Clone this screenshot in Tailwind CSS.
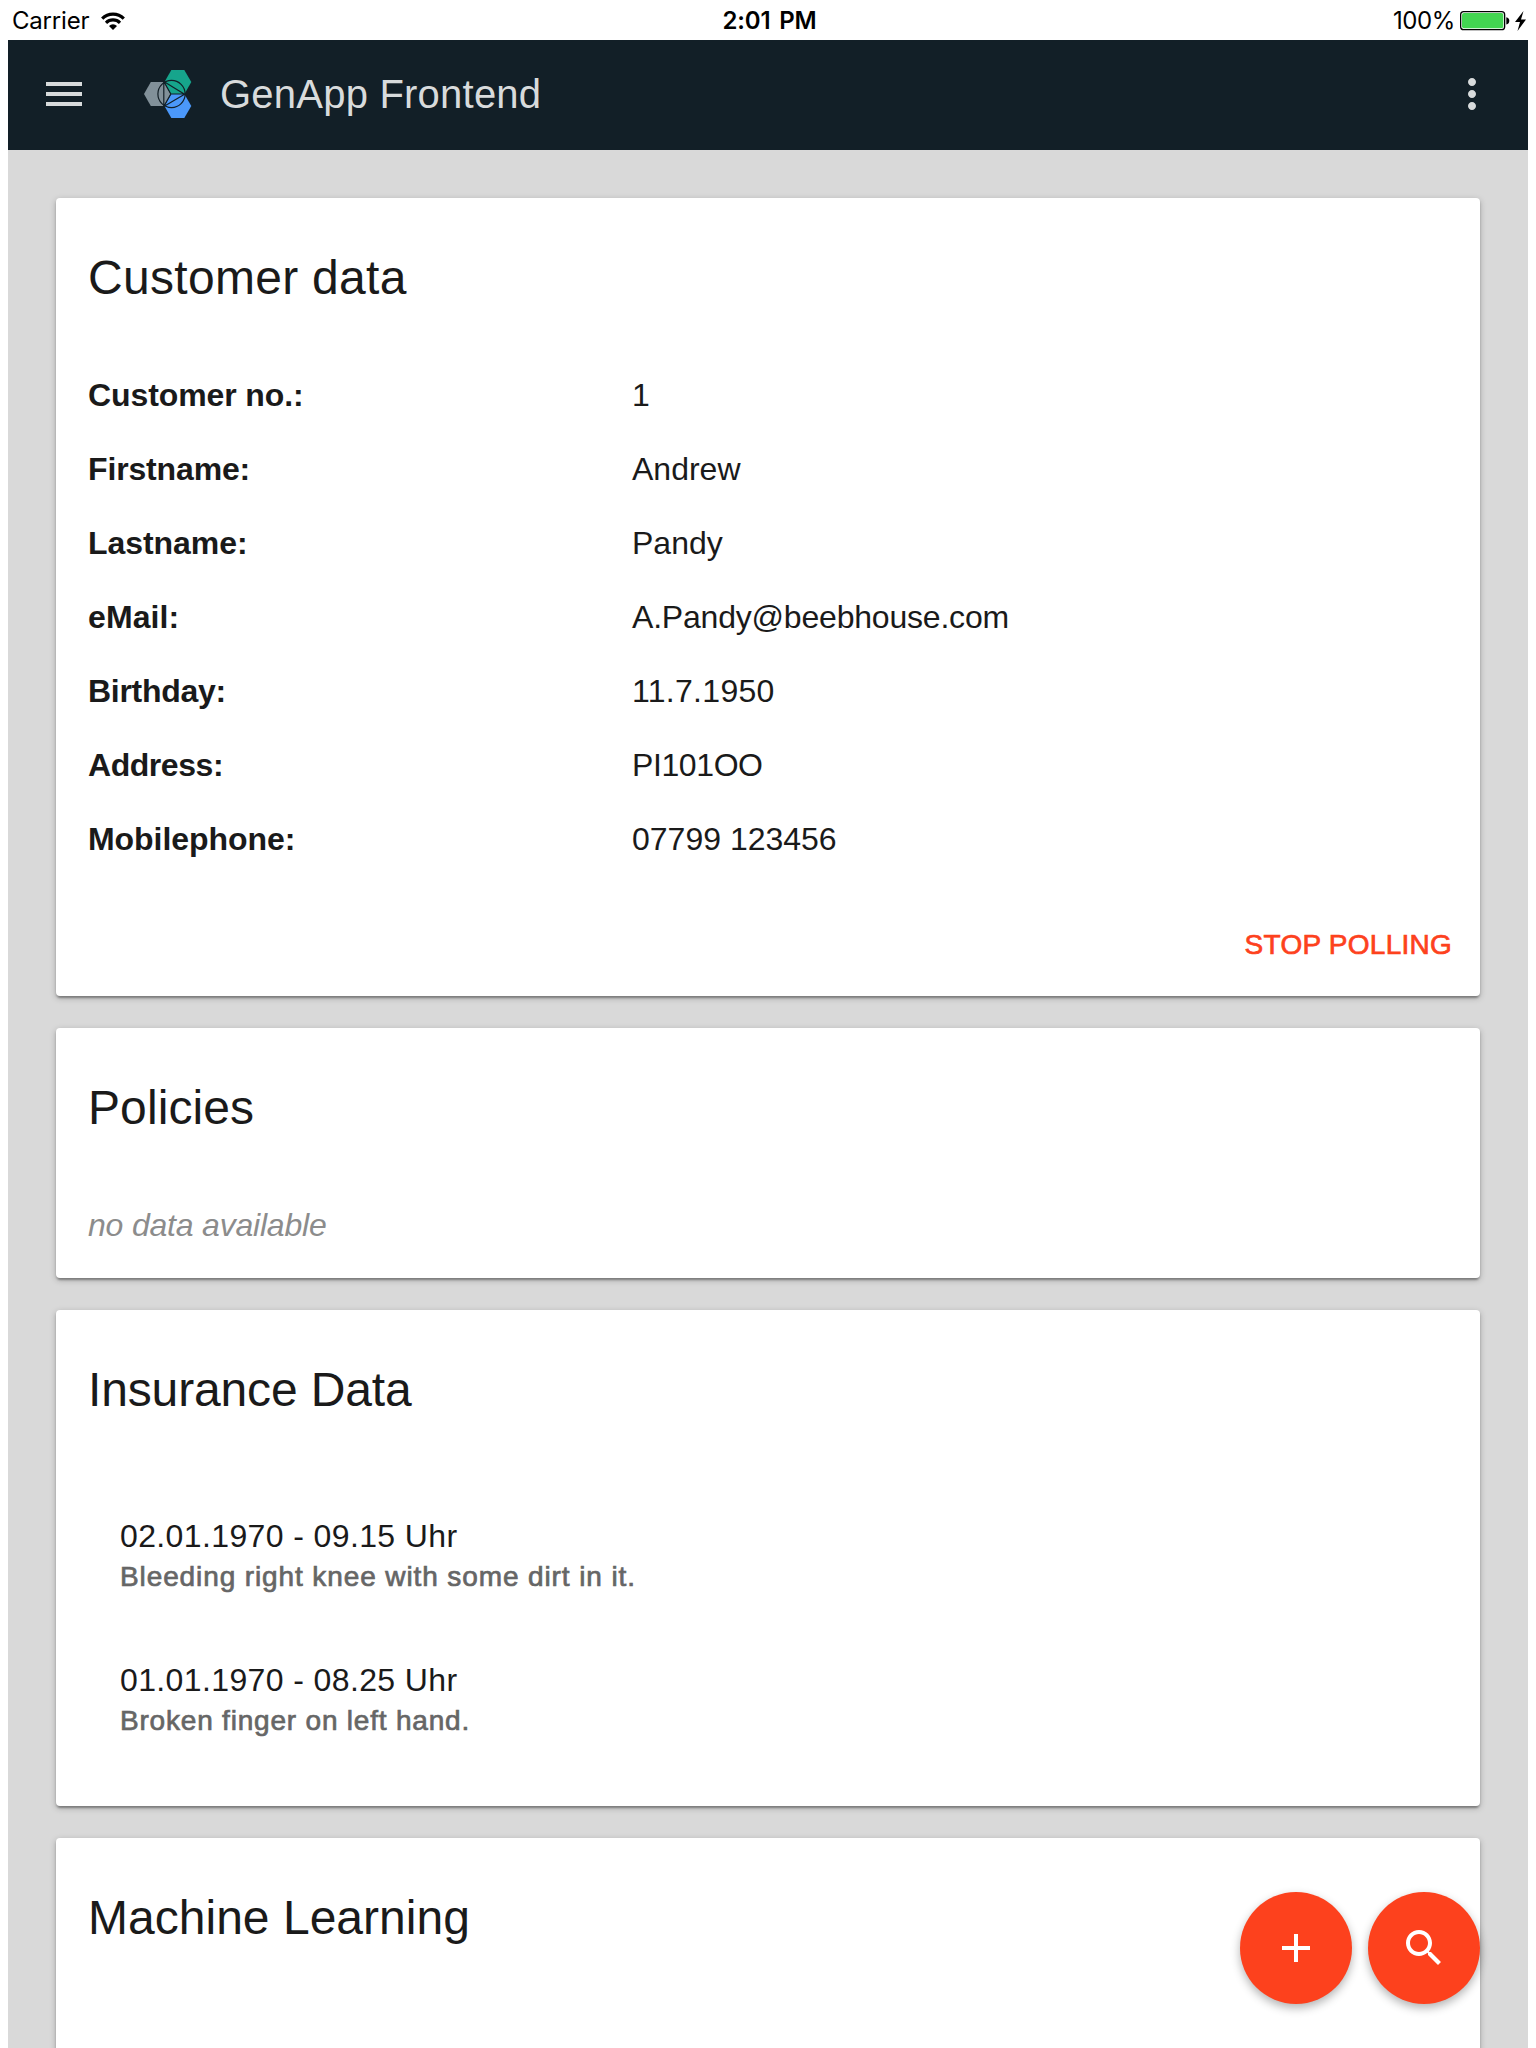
<!DOCTYPE html>
<html lang="en">
<head>
<meta charset="utf-8">
<title>GenApp Frontend</title>
<script src="https://cdn.jsdelivr.net/npm/@tailwindcss/browser@4"></script>
</head>
<body class="h-[2048px] overflow-hidden bg-white font-['Liberation_Sans',Arial,sans-serif] text-[32px] text-[#1a1a1a]">
<div class="flex h-10 items-center justify-between pl-3 pr-[9px] pt-0.5 font-['Inter',sans-serif] text-[24px] text-black">
  <div class="flex flex-1 items-center gap-3">
    <span class="leading-10 tracking-[-0.2px]">Carrier</span>
    <svg class="h-[18px] w-6" viewBox="0 0 24 18" fill="none" stroke="#000" stroke-width="3.2"><path d="M1.2 6.6a15.3 15.3 0 0 1 21.600 0"/><path d="M5 10.800a10 10 0 0 1 14 0"/><path d="M12 18l-4-4a5.700 5.700 0 0 1 8 0z" fill="#000" stroke="none"/></svg>
  </div>
  <span class="font-semibold leading-10 tracking-[-0.2px] [word-spacing:3px]">2:01 PM</span>
  <div class="flex flex-1 items-center justify-end">
    <span class="mr-[5px] leading-10 tracking-[-0.4px]">100%</span>
    <svg class="h-5 w-[67px]" viewBox="0 0 67 20"><rect x=".65" y=".65" width="44" height="18" rx="3" fill="#fff" stroke="#000" stroke-width="1.3"/><rect x="2" y="2" width="41.300" height="15.300" rx="2" fill="#43d551"/><path d="M46.300 6.200q3 .6 3 3.600t-3 3.600z"/><path d="M63.500 0L55 11h5l-2.500 9L66 8.500h-5z"/></svg>
  </div>
</div>
<div class="mx-2 h-[2008px] bg-[#d9d9d9]">
  <header class="flex h-[110px] items-center bg-[#121f27] pl-8 pr-8 text-[#d8dbdc]">
    <svg class="-mt-0.5 size-12" viewBox="0 0 24 24" fill="currentColor"><path d="M3 18h18v-2H3v2zm0-5h18v-2H3v2zm0-7v2h18V6H3z"/></svg>
    <svg class="-mt-0.5 ml-14 h-12 w-12" viewBox="0 0 48 48" fill="none" stroke="#121f27" stroke-width="1.200">
      <path d="M0 24l6.800-12h13l6.800 12-6.800 12h-13z" fill="#819099" stroke="none"/>
      <path d="M20.500 12L27.300 0h13l7 12-6.800 12h-13.500z" fill="#16a58c" stroke="none"/>
      <path d="M20.500 36l6.800-12h13l7 12-7 12h-13z" fill="#4b98fa" stroke="none"/>
      <circle cx="27.500" cy="24" r="13.600"/><path d="M19.800 11.500v25M19.800 11.500L41 24.500M19.800 36.500L41 24M19.800 11.500l7 12.500-7 12.500M26.800 24H41"/>
    </svg>
    <h1 class="-mt-0.5 ml-7 text-[40px] leading-[110px] tracking-[0.22px]">GenApp Frontend</h1>
    <svg class="-mt-0.5 ml-auto size-12" viewBox="0 0 24 24" fill="currentColor"><path d="M12 8c1.100 0 2-.9 2-2s-.9-2-2-2-2 .9-2 2 .9 2 2 2zm0 2c-1.100 0-2 .9-2 2s.9 2 2 2 2-.9 2-2-.9-2-2-2zm0 6c-1.100 0-2 .9-2 2s.9 2 2 2 2-.9 2-2-.9-2-2-2z"/></svg>
  </header>
  <main class="flex flex-col gap-8 px-12 pt-12">
    <section class="h-[798px] rounded bg-white px-8 pt-12 shadow-[0_2px_6px_rgb(0_0_0/0.25),0_2px_2px_rgb(0_0_0/0.18),0_4px_2px_-2px_rgb(0_0_0/0.15)]">
      <h2 class="text-[48px] leading-[64px] tracking-[0.3px]">Customer data</h2>
      <dl class="mt-12 grid grid-cols-[544px_1fr] leading-[74px]">
        <dt class="font-bold tracking-[-0.1px]">Customer no.:</dt><dd>1</dd>
        <dt class="font-bold tracking-[-0.15px]">Firstname:</dt><dd>Andrew</dd>
        <dt class="font-bold tracking-[-0.05px]">Lastname:</dt><dd>Pandy</dd>
        <dt class="font-bold tracking-[0.1px]">eMail:</dt><dd class="tracking-[-0.2px]">A.Pandy@beebhouse.com</dd>
        <dt class="font-bold tracking-[-0.3px]">Birthday:</dt><dd class="tracking-[0.3px]">11.7.1950</dd>
        <dt class="font-bold tracking-[-0.45px]">Address:</dt><dd class="tracking-[-0.4px]">PI101OO</dd>
        <dt class="font-bold tracking-[-0.05px]">Mobilephone:</dt><dd>07799 123456</dd>
      </dl>
      <div class="mt-[33px] flex justify-end"><button class="-mr-1 text-[28px] leading-[72px] tracking-[0.25px] text-[#fd411d] [-webkit-text-stroke:0.7px]">STOP POLLING</button></div>
    </section>
    <section class="h-[250px] rounded bg-white px-8 pt-12 shadow-[0_2px_6px_rgb(0_0_0/0.25),0_2px_2px_rgb(0_0_0/0.18),0_4px_2px_-2px_rgb(0_0_0/0.15)]">
      <h2 class="text-[48px] leading-[64px] tracking-[0.1px]">Policies</h2>
      <p class="mt-[65px] italic leading-10 tracking-[-0.2px] text-[#8c8c8c]">no data available</p>
    </section>
    <section class="h-[496px] rounded bg-white px-8 pt-12 shadow-[0_2px_6px_rgb(0_0_0/0.25),0_2px_2px_rgb(0_0_0/0.18),0_4px_2px_-2px_rgb(0_0_0/0.15)]">
      <h2 class="text-[48px] leading-[64px] tracking-[-0.15px]">Insurance Data</h2>
      <ul class="mt-[94px] flex flex-col gap-[62px] px-8">
        <li><h3 class="leading-10 tracking-[0.38px]">02.01.1970 - 09.15 Uhr</h3><p class="text-[28px] leading-[42px] tracking-[0.89px] text-[#666] [-webkit-text-stroke:0.7px]">Bleeding right knee with some dirt in it.</p></li>
        <li><h3 class="leading-10 tracking-[0.38px]">01.01.1970 - 08.25 Uhr</h3><p class="text-[28px] leading-[42px] tracking-[0.8px] text-[#666] [-webkit-text-stroke:0.7px]">Broken finger on left hand.</p></li>
      </ul>
    </section>
    <section class="h-[250px] rounded bg-white px-8 pt-12 shadow-[0_2px_6px_rgb(0_0_0/0.25),0_2px_2px_rgb(0_0_0/0.18),0_4px_2px_-2px_rgb(0_0_0/0.15)]">
      <h2 class="text-[48px] leading-[64px] tracking-[0.02px]">Machine Learning</h2>
    </section>
  </main>
</div>
<div class="fixed bottom-11 right-14 flex gap-4 text-white">
  <button class="flex size-28 items-center justify-center rounded-full bg-[#fd411d] shadow-[0_4px_10px_rgb(0_0_0/0.3)]"><svg class="size-12" viewBox="0 0 24 24" fill="currentColor"><path d="M19 13h-6v6h-2v-6H5v-2h6V5h2v6h6v2z"/></svg></button>
  <button class="flex size-28 items-center justify-center rounded-full bg-[#fd411d] shadow-[0_4px_10px_rgb(0_0_0/0.3)]"><svg class="size-12" viewBox="0 0 24 24" fill="currentColor"><path d="M15.500 14h-.79l-.28-.27C15.410 12.590 16 11.110 16 9.500 16 5.910 13.090 3 9.500 3S3 5.910 3 9.500 5.910 16 9.500 16c1.610 0 3.090-.59 4.230-1.570l.27.28v.79l5 4.990L20.490 19l-4.990-5zm-6 0C7.010 14 5 11.990 5 9.500S7.010 5 9.500 5 14 7.010 14 9.500 11.990 14 9.500 14z"/></svg></button>
</div>
</body>
</html>
